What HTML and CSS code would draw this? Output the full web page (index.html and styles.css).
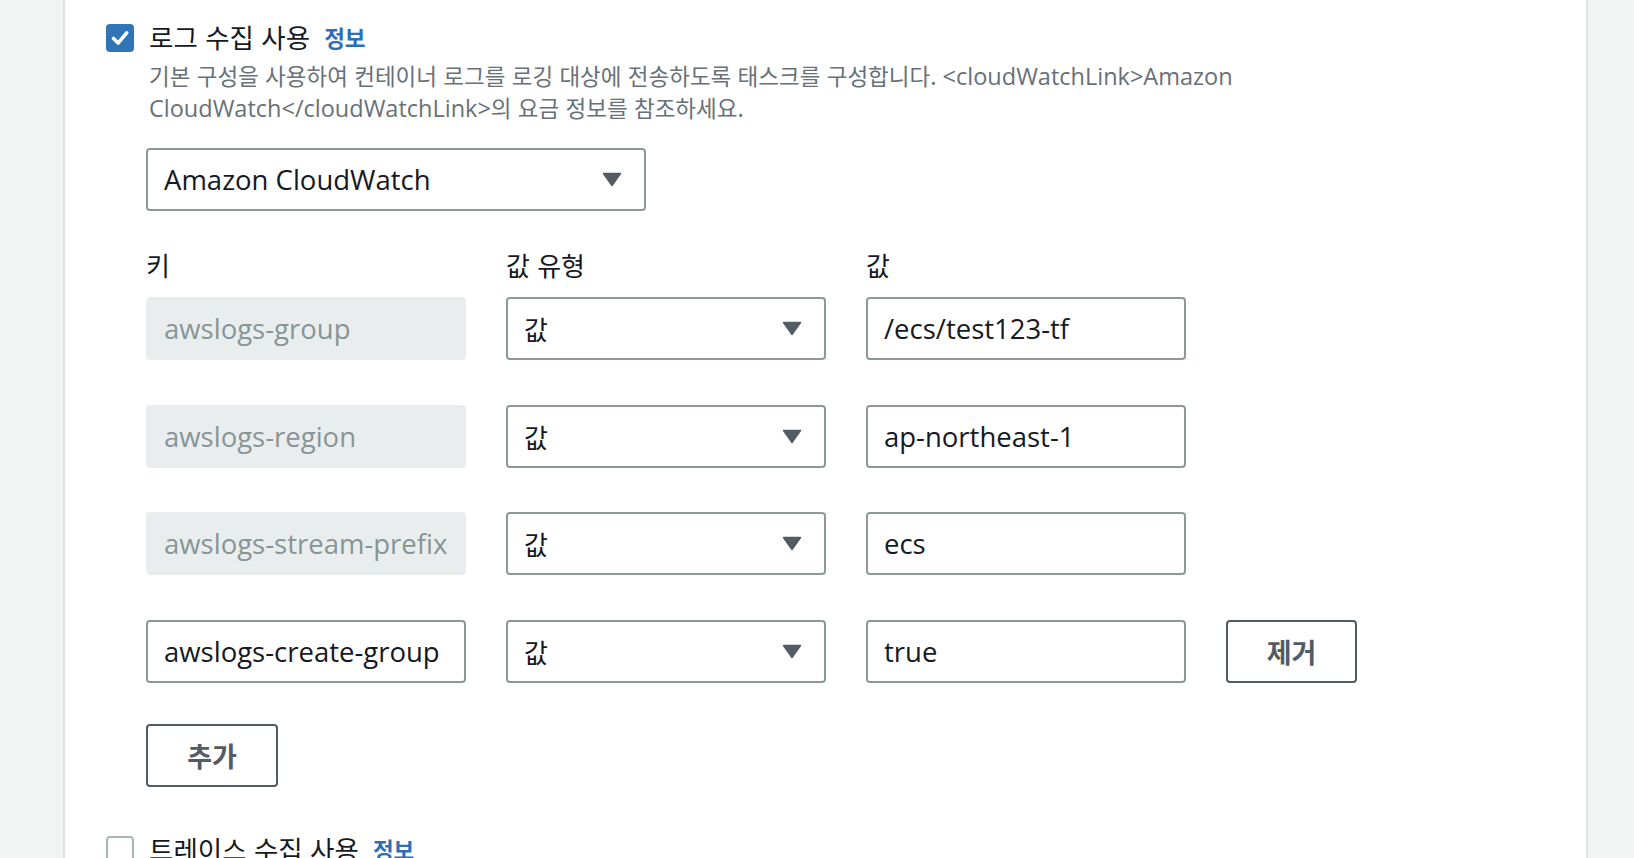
FILE: index.html
```html
<!DOCTYPE html>
<html lang="ko">
<head>
<meta charset="utf-8">
<title>로그 수집</title>
<link rel="stylesheet" href="styles.css">
</head>
<body>
<div class="page">
  <section class="card">
    <div class="option">
      <span class="checkbox checked">
        <svg viewBox="0 0 28 28" width="28" height="28"><path d="M7.5 14.5l4.6 4.6 8.6-10.2" fill="none" stroke="#fff" stroke-width="3.6" stroke-linecap="round" stroke-linejoin="round"/></svg>
      </span>
      <div class="option-body">
        <div class="option-title"><span class="title-text">로그 수집 사용</span><a class="info">정보</a></div>
        <p class="desc"><span class="ko">기본 구성을 사용하여 컨테이너 로그를 로깅 대상에 전송하도록 태스크를 구성합니다.</span> &lt;cloudWatchLink&gt;Amazon CloudWatch&lt;/cloudWatchLink&gt;<span class="ko">의 요금 정보를 참조하세요.</span></p>
      </div>
    </div>

    <div class="log-config">
      <div class="select select-wide">
        <span class="select-text">Amazon CloudWatch</span>
        <svg class="caret" viewBox="0 0 20 15" width="20" height="15"><path d="M1.5 1.5H18.5L10 13.5Z" fill="#545b64" stroke="#545b64" stroke-width="1.5" stroke-linejoin="round"/></svg>
      </div>

      <div class="kv-head">
        <div class="label">키</div>
        <div class="label">값 유형</div>
        <div class="label">값</div>
      </div>

      <div class="kv-rows">
        <div class="kv-row">
          <div class="input disabled">awslogs-group</div>
          <div class="select"><span class="select-text ko-val">값</span><svg class="caret" viewBox="0 0 20 15" width="20" height="15"><path d="M1.5 1.5H18.5L10 13.5Z" fill="#545b64" stroke="#545b64" stroke-width="1.5" stroke-linejoin="round"/></svg></div>
          <div class="input">/ecs/test123-tf</div>
        </div>
        <div class="kv-row">
          <div class="input disabled">awslogs-region</div>
          <div class="select"><span class="select-text ko-val">값</span><svg class="caret" viewBox="0 0 20 15" width="20" height="15"><path d="M1.5 1.5H18.5L10 13.5Z" fill="#545b64" stroke="#545b64" stroke-width="1.5" stroke-linejoin="round"/></svg></div>
          <div class="input">ap-northeast-1</div>
        </div>
        <div class="kv-row">
          <div class="input disabled">awslogs-stream-prefix</div>
          <div class="select"><span class="select-text ko-val">값</span><svg class="caret" viewBox="0 0 20 15" width="20" height="15"><path d="M1.5 1.5H18.5L10 13.5Z" fill="#545b64" stroke="#545b64" stroke-width="1.5" stroke-linejoin="round"/></svg></div>
          <div class="input">ecs</div>
        </div>
        <div class="kv-row">
          <div class="input">awslogs-create-group</div>
          <div class="select"><span class="select-text ko-val">값</span><svg class="caret" viewBox="0 0 20 15" width="20" height="15"><path d="M1.5 1.5H18.5L10 13.5Z" fill="#545b64" stroke="#545b64" stroke-width="1.5" stroke-linejoin="round"/></svg></div>
          <div class="input">true</div>
          <button class="btn">제거</button>
        </div>
      </div>

      <button class="btn btn-add">추가</button>
    </div>

    <div class="option option-trace">
      <span class="checkbox"></span>
      <div class="option-body">
        <div class="option-title"><span class="title-text">트레이스 수집 사용</span><a class="info">정보</a></div>
      </div>
    </div>
  </section>
</div>
</body>
</html>
```

FILE: styles.css
```css
html, body {
  margin: 0;
  padding: 0;
  background: #f2f3f3;
  height: 100%;
  overflow: hidden;
}

body {
  font-family: "Open Sans", "Noto Sans CJK KR", sans-serif;
  color: #16191f;
}

.page {
  padding-left: 65px;
  width: 1521px;
}

.card {
  background: #ffffff;
  min-height: 900px;
  box-sizing: border-box;
  padding: 21px 41px 0 41px;
  box-shadow: -2px 0 0 #dfe2e2, 2px 0 0 #dfe2e2, -1px 0 0 #c9cdcd, 1px 0 0 #c9cdcd;
}

.option {
  display: flex;
  gap: 12px;
  align-items: flex-start;
}

.option-trace {
  margin-top: 46px;
}

.checkbox {
  flex: none;
  width: 28px;
  height: 28px;
  margin-top: 3px;
  box-sizing: border-box;
  border-radius: 4px;
  border: 2px solid #aab7b8;
  background: #ffffff;
  display: flex;
  align-items: center;
  justify-content: center;
}

.checkbox.checked {
  border: none;
  background: #3174b8;
}

.checkbox svg {
  display: block;
}

.option-body {
  display: flex;
  flex-direction: column;
}

.option-title {
  display: flex;
  align-items: center;
  height: 32px;
  padding-left: 3px;
}

.title-text {
  font-family: "Noto Sans CJK KR", sans-serif;
  font-size: 26.5px;
  line-height: 32px;
  color: #16191f;
}

.info {
  font-family: "Noto Sans CJK KR", sans-serif;
  font-size: 22.5px;
  font-weight: 700;
  color: #2a6fb8;
  margin-left: 14px;
  line-height: 32px;
}

.desc {
  margin: 7px 0 0 0;
  padding-left: 3px;
  max-width: 1140px;
  font-size: 23.5px;
  line-height: 32px;
  color: #687078;
}

.desc .ko {
  font-family: "Noto Sans CJK KR", sans-serif;
  font-size: 22.5px;
  line-height: 16px;
}

.log-config {
  margin-left: 40px;
  margin-top: 24px;
  display: flex;
  flex-direction: column;
  align-items: flex-start;
}

.select,
.input {
  box-sizing: border-box;
  height: 63px;
  border: 2px solid #8d9999;
  border-radius: 4px;
  background: #ffffff;
  display: flex;
  align-items: center;
  padding: 0 22px 0 16px;
  font-size: 27.5px;
  color: #16191f;
  white-space: nowrap;
  overflow: hidden;
}

.select {
  justify-content: space-between;
}

.select-wide {
  width: 500px;
}

.caret {
  flex: none;
  display: block;
}

.ko-val {
  font-family: "Noto Sans CJK KR", sans-serif;
  font-size: 26px;
}

.input.disabled {
  background: #eaeded;
  border-color: #eaeded;
  color: #879596;
}

.kv-head,
.kv-row {
  display: grid;
  grid-template-columns: 320px 320px 320px 131px;
  column-gap: 40px;
}

.kv-head {
  margin-top: 38px;
  margin-bottom: 16px;
}

.label {
  font-family: "Noto Sans CJK KR", sans-serif;
  font-size: 26px;
  line-height: 32px;
  color: #16191f;
}

.kv-rows {
  display: flex;
  flex-direction: column;
  gap: 44.7px;
}

.btn {
  box-sizing: border-box;
  height: 63px;
  width: 131px;
  border: 2px solid #545b64;
  border-radius: 4px;
  background: #ffffff;
  color: #545b64;
  font-family: "Noto Sans CJK KR", sans-serif;
  font-size: 27px;
  font-weight: 700;
  padding: 0;
  cursor: pointer;
}

.btn-add {
  width: 132px;
  margin-top: 41px;
}
```
